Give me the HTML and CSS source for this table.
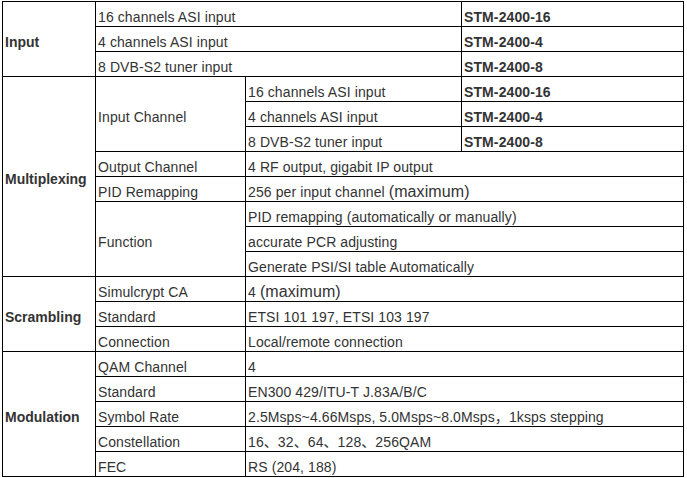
FILE: index.html
```html
<!DOCTYPE html>
<html>
<head>
<meta charset="utf-8">
<link rel="stylesheet" href="styles.css">
</head>
<body>
<table class="spec">
  <colgroup>
    <col class="c1"><col class="c2"><col class="c3"><col class="c4">
  </colgroup>
  <tbody>
    <tr><th rowspan="3">Input</th><td colspan="2">16 channels ASI input</td><td class="model">STM-2400-16</td></tr>
    <tr><td colspan="2">4 channels ASI input</td><td class="model">STM-2400-4</td></tr>
    <tr><td colspan="2">8 DVB-S2 tuner input</td><td class="model">STM-2400-8</td></tr>

    <tr><th rowspan="8">Multiplexing</th><td rowspan="3">Input Channel</td><td>16 channels ASI input</td><td class="model">STM-2400-16</td></tr>
    <tr><td>4 channels ASI input</td><td class="model">STM-2400-4</td></tr>
    <tr><td>8 DVB-S2 tuner input</td><td class="model">STM-2400-8</td></tr>
    <tr><td>Output Channel</td><td colspan="2">4 RF output, gigabit IP output</td></tr>
    <tr><td>PID Remapping</td><td colspan="2">256 per input channel <span class="big">(maximum)</span></td></tr>
    <tr><td rowspan="3">Function</td><td colspan="2">PID remapping (automatically or manually)</td></tr>
    <tr><td colspan="2">accurate PCR adjusting</td></tr>
    <tr><td colspan="2">Generate PSI/SI table Automatically</td></tr>

    <tr><th rowspan="3">Scrambling</th><td>Simulcrypt CA</td><td colspan="2">4 <span class="big">(maximum)</span></td></tr>
    <tr><td>Standard</td><td colspan="2">ETSI 101 197, ETSI 103 197</td></tr>
    <tr><td>Connection</td><td colspan="2">Local/remote connection</td></tr>

    <tr><th rowspan="5">Modulation</th><td>QAM Channel</td><td colspan="2">4</td></tr>
    <tr><td>Standard</td><td colspan="2">EN300 429/ITU-T J.83A/B/C</td></tr>
    <tr><td>Symbol Rate</td><td colspan="2">2.5Msps~4.66Msps, 5.0Msps~8.0Msps，1ksps stepping</td></tr>
    <tr><td>Constellation</td><td colspan="2">16、32、64、128、256QAM</td></tr>
    <tr><td>FEC</td><td colspan="2">RS (204, 188)</td></tr>
  </tbody>
</table>
</body>
</html>
```

FILE: styles.css
```css
html, body {
  margin: 0;
  padding: 0;
  background: #ffffff;
}
body {
  padding: 1px 0 0 2px;
  font-family: "Liberation Sans", Arial, "Noto Sans CJK SC", sans-serif;
  font-size: 14px;
  color: #333333;
}
.spec {
  border-collapse: collapse;
  table-layout: fixed;
  width: 682px;
}
.c1 { width: 93px; }
.c2 { width: 150px; }
.c3 { width: 216px; }
.c4 { width: 222px; }
.spec th,
.spec td {
  border: 1px solid #000000;
  height: 19px;
  padding: 5px 0 0 2px;
  text-align: left;
  vertical-align: middle;
  line-height: 16px;
  white-space: nowrap;
  overflow: hidden;
  letter-spacing: 0.1px;
}
.spec th {
  font-weight: bold;
  letter-spacing: 0;
}
.model {
  font-weight: bold;
  letter-spacing: 0;
}
.big {
  font-size: 16px;
}
```
